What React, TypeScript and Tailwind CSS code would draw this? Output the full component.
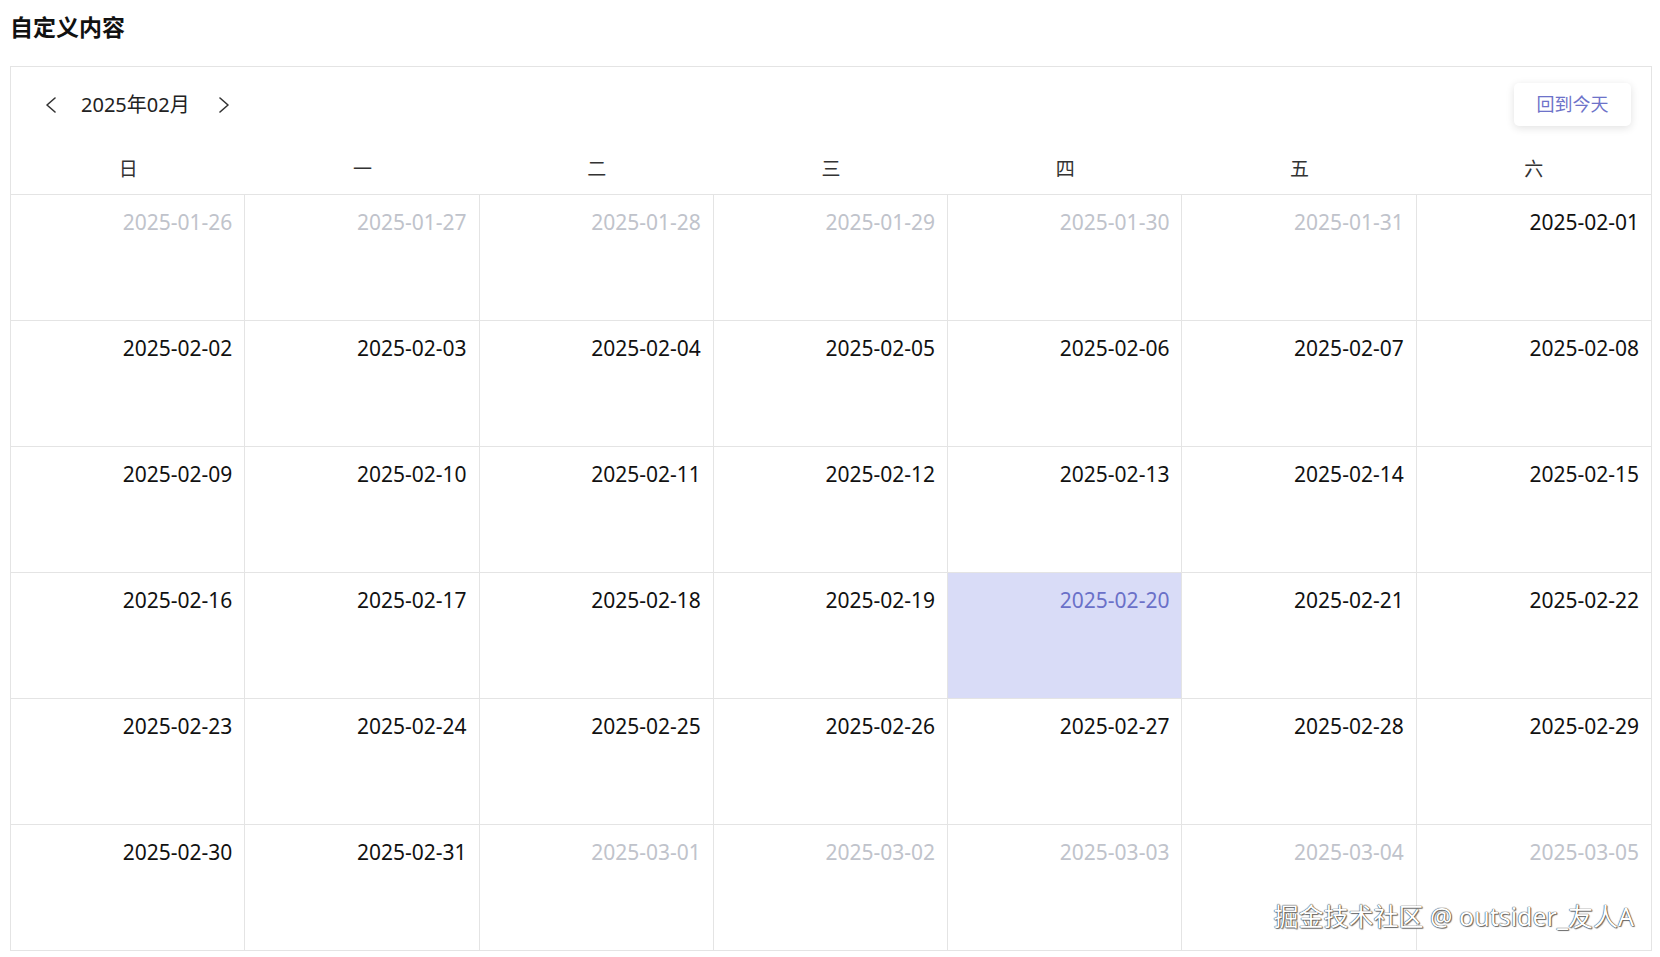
import React from "react";

type Day = { label: string; muted: boolean; today: boolean };

const pad = (n: number) => (n < 10 ? "0" + n : "" + n);

function buildDays(): Day[] {
  const days: Day[] = [];
  for (let d = 26; d <= 31; d++) days.push({ label: `2025-01-${pad(d)}`, muted: true, today: false });
  for (let d = 1; d <= 31; d++) days.push({ label: `2025-02-${pad(d)}`, muted: false, today: d === 20 });
  for (let d = 1; d <= 5; d++) days.push({ label: `2025-03-${pad(d)}`, muted: true, today: false });
  return days;
}

const weekdays = ["日", "一", "二", "三", "四", "五", "六"];

function Chevron({ dir }: { dir: "left" | "right" }) {
  return (
    <svg width="12" height="16" viewBox="0 0 12 16" fill="none">
      <polyline
        points={dir === "left" ? "10,1 2,8 10,15" : "2,1 10,8 2,15"}
        stroke="#333"
        strokeWidth="1.6"
        strokeLinecap="round"
        strokeLinejoin="round"
      />
    </svg>
  );
}

export default function App() {
  const days = buildDays();
  return (
    <div
      className="relative w-[1660px] h-[957px] bg-white overflow-hidden pl-[10px]"
      style={{ fontFamily: '"Noto Sans", "Noto Sans CJK SC", sans-serif' }}
    >
      <div className="h-[66px] flex items-start pt-[10px]">
        <h1 className="text-[23px] font-bold text-[#111] leading-[34px]">自定义内容</h1>
      </div>
      <div className="border border-[#e4e4e4] w-[1642px] h-[885px] flex flex-col">
        <div className="pt-[16px] h-[59px] flex items-center pl-[33px] pr-[20px]">
          <button className="flex items-center justify-center w-[14px] h-[20px]">
            <Chevron dir="left" />
          </button>
          <span className="ml-[23px] text-[20px] text-[#222] leading-[28px]">2025年02月</span>
          <button className="ml-[27px] flex items-center justify-center w-[14px] h-[20px]">
            <Chevron dir="right" />
          </button>
          <div className="flex-1" />
          <button className="w-[117px] h-[43px] rounded-[5px] bg-white shadow-[0_2px_8px_rgba(0,0,0,0.12)] text-[18px] text-[#6d72c9]">
            回到今天
          </button>
        </div>
        <div className="mt-[17px] h-[51px] grid grid-cols-7 items-center">
          {weekdays.map((w) => (
            <div key={w} className="text-center text-[19px] text-[#333] leading-[28px]">
              {w}
            </div>
          ))}
        </div>
        <div className="grid grid-cols-7 grid-rows-6 flex-1">
          {days.map((d, i) => (
            <div
              key={d.label}
              className={
                "border-t border-[#e4e4e4] flex justify-end pt-[13px] pr-[12px] " +
                (i % 7 !== 6 ? "border-r " : "") +
                (d.today ? "bg-[#d9dcf7]" : "")
              }
            >
              <span
                className={
                  "text-[21px] leading-[28px] " +
                  (d.today ? "text-[#6a70c8]" : d.muted ? "text-[#c0c3cb]" : "text-[#111]")
                }
              >
                {d.label}
              </span>
            </div>
          ))}
        </div>
      </div>
      <div className="absolute right-[26px] top-[899px] text-[25px] leading-[34px] text-white [text-shadow:0_0_1px_#333,0_0_1px_#333,1px_1px_1px_#777] whitespace-nowrap">
        掘金技术社区 @ outsider_友人A
      </div>
    </div>
  );
}
